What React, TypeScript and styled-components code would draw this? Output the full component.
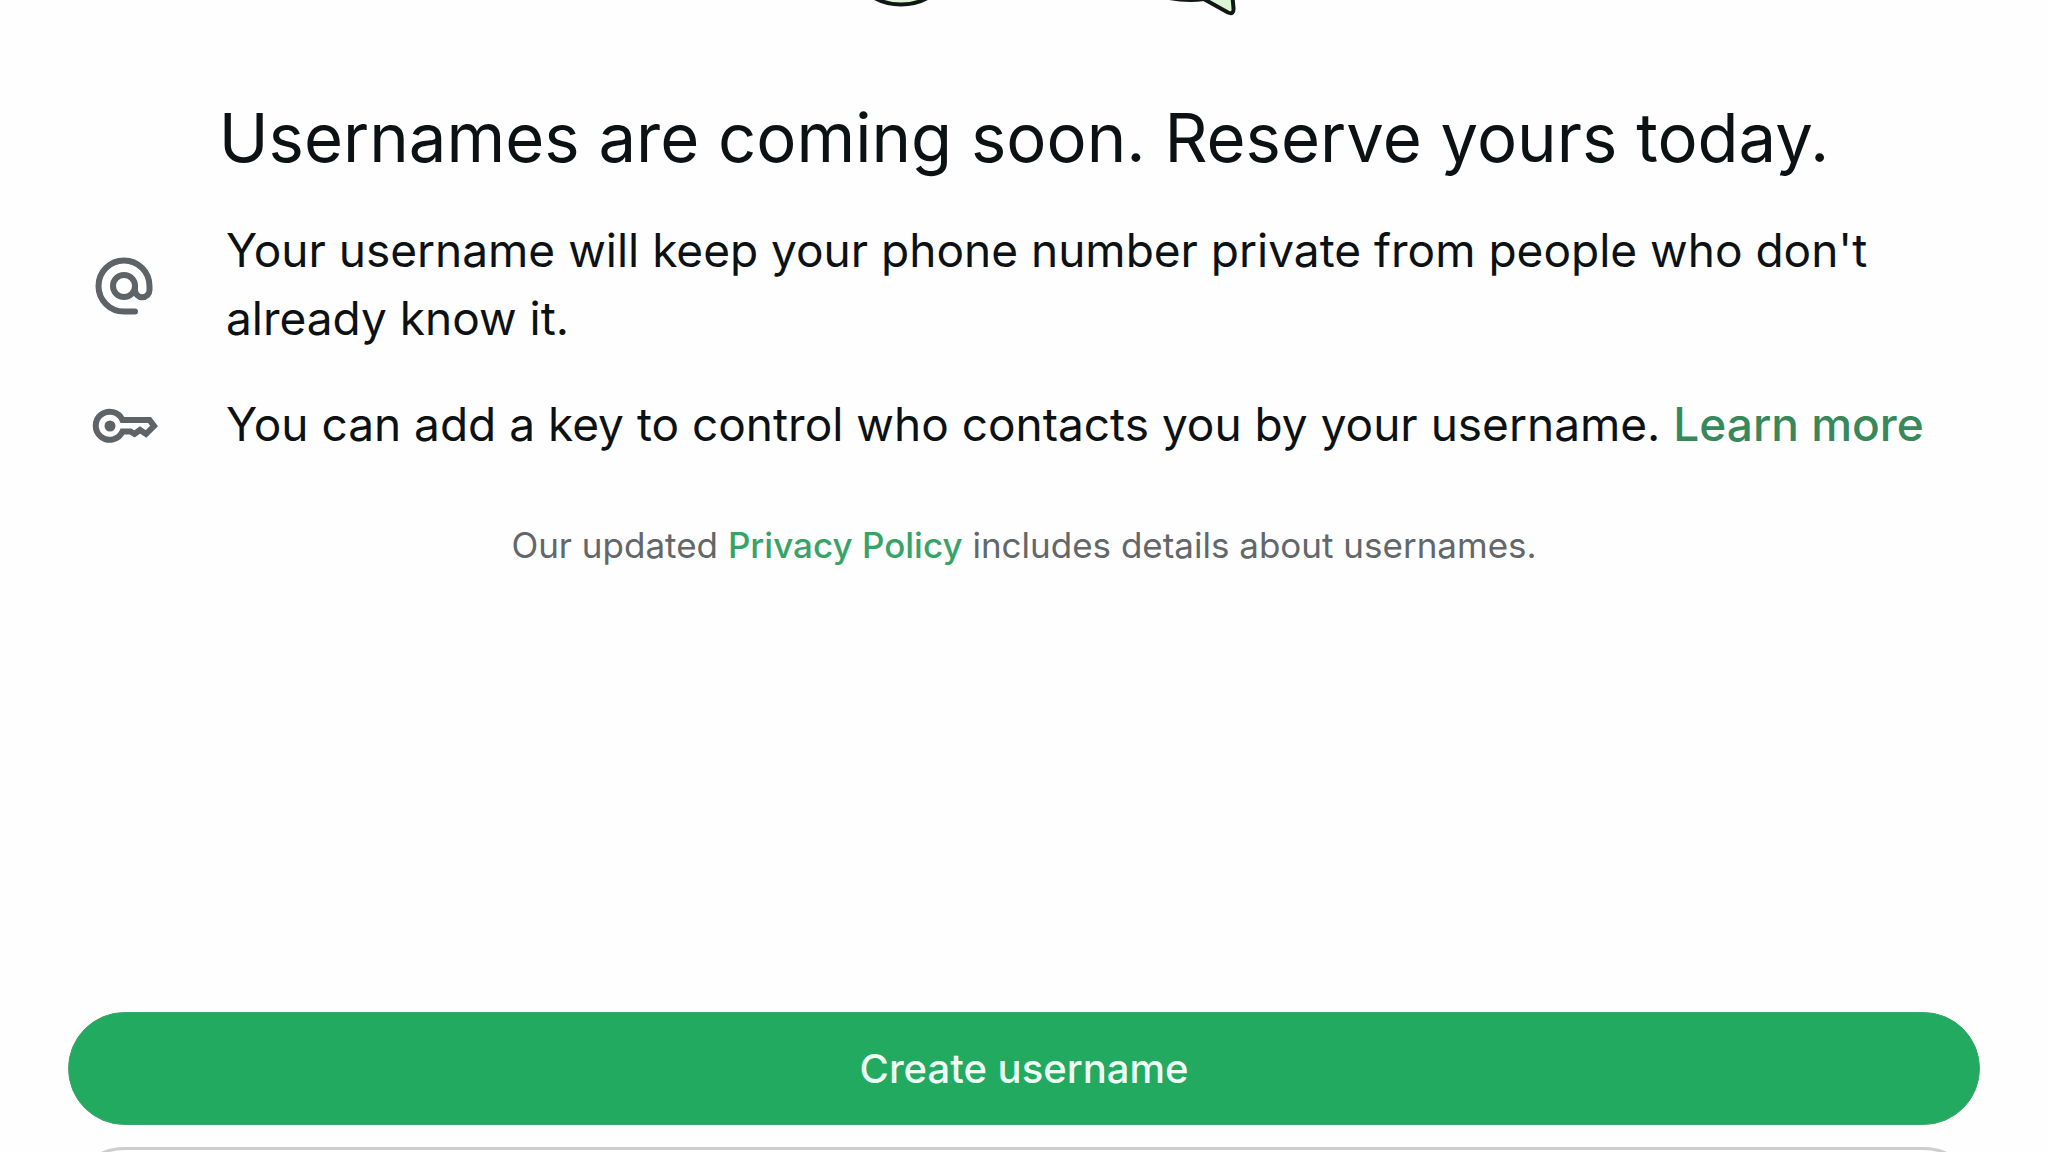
import React from 'react';
import styled, { createGlobalStyle } from 'styled-components';

const GlobalStyle = createGlobalStyle`
  *, *::before, *::after { box-sizing: border-box; }
  body {
    margin: 0;
    background: #fefefe;
    color: #0c1114;
    font-family: Inter, 'Noto Sans', sans-serif;
  }
`;

const Screen = styled.main`
  display: flex;
  flex-direction: column;
  height: 100vh;
  overflow: hidden;
`;

const Intro = styled.section`
  flex: 1 0 auto;
  display: flex;
  flex-direction: column;
  align-items: center;
`;

const Artwork = styled.svg`
  display: block;
  width: 448px;
  height: 18px;
`;

const Title = styled.h1`
  margin: 80px 0 38px;
  font-size: 67px;
  font-weight: 400;
  line-height: 80px;
  text-align: center;
`;

const Features = styled.ul`
  align-self: stretch;
  display: flex;
  flex-direction: column;
  gap: 38px;
  margin: 0;
  padding: 0 90px;
  list-style: none;
`;

const Feature = styled.li`
  display: flex;
  align-items: center;
  gap: 68px;
  font-size: 46px;
  line-height: 68px;
`;

const FeatureIcon = styled.svg`
  flex: none;
  width: 68px;
  height: 68px;
  fill: none;
  stroke: #5d6366;
  stroke-width: 6;
  stroke-linecap: round;
  stroke-linejoin: round;
`;

const FeatureText = styled.p`
  flex: 1;
  margin: 0;
`;

const Link = styled.a<{ $tone: string }>`
  color: ${(p) => p.$tone};
  font-weight: 500;
  text-decoration: none;
`;

const Notice = styled.p`
  margin: 63px 0 0;
  color: #62676a;
  font-size: 35px;
  line-height: 48px;
`;

const Actions = styled.div`
  flex: none;
  display: flex;
  flex-direction: column;
  gap: 22px;
  height: 140px;
  padding: 0 68px;
`;

const ActionButton = styled.button<{ $primary?: boolean }>`
  flex: none;
  height: 113px;
  border: ${(p) => (p.$primary ? '1px solid #3da568' : '3px solid #cdcdcd')};
  border-radius: 57px;
  background: ${(p) => (p.$primary ? '#22aa61' : 'transparent')};
  color: #effff4;
  font-family: inherit;
  font-size: 40px;
  font-weight: 500;
  cursor: pointer;
`;

export default function App() {
  return (
    <>
      <GlobalStyle />
      <Screen>
        <Intro>
          <Artwork viewBox="0 0 448 18" aria-hidden="true" fill="#def5d3" stroke="#111715" strokeWidth="4" strokeLinejoin="round">
            <circle cx="101" cy="-51" r="55.5" />
            <path d="M402 -2 L428 12.5 Q434 15 433.5 8 L431.5 -14 H402 Z" />
            <path d="M360 -4 Q384 2 404 -1" fill="none" />
          </Artwork>
          <Title>Usernames are coming soon. Reserve yours today.</Title>
          <Features>
            <Feature>
              <FeatureIcon viewBox="2 2 68 68" aria-hidden="true">
                <circle cx="36" cy="38" r="11" />
                <path d="M47 63.5 H36 A25.5 25.5 0 1 1 61.5 38 V42 a7.25 7.25 0 0 1 -14.5 0 V38" />
              </FeatureIcon>
              <FeatureText>
                Your username will keep your phone number private from people who don't already know it.
              </FeatureText>
            </Feature>
            <Feature>
              <FeatureIcon viewBox="2 2 68 68" aria-hidden="true">
                <path d="M34.5 32 H61.5 L66 38 L58 46 L52 42 L46.5 46 L42.5 43.5 H34.5 A14 14 0 1 1 34.5 32 Z" strokeLinejoin="miter" />
                <circle cx="22" cy="38" r="5.5" fill="#5d6366" stroke="none" />
              </FeatureIcon>
              <FeatureText>
                You can add a key to control who contacts you by your username.{' '}
                <Link href="#learn-more" $tone="#37885b">Learn more</Link>
              </FeatureText>
            </Feature>
          </Features>
          <Notice>
            Our updated <Link href="#privacy" $tone="#38a366">Privacy Policy</Link> includes details about usernames.
          </Notice>
        </Intro>
        <Actions>
          <ActionButton type="button" $primary>Create username</ActionButton>
          <ActionButton type="button" aria-label="Not now" />
        </Actions>
      </Screen>
    </>
  );
}
